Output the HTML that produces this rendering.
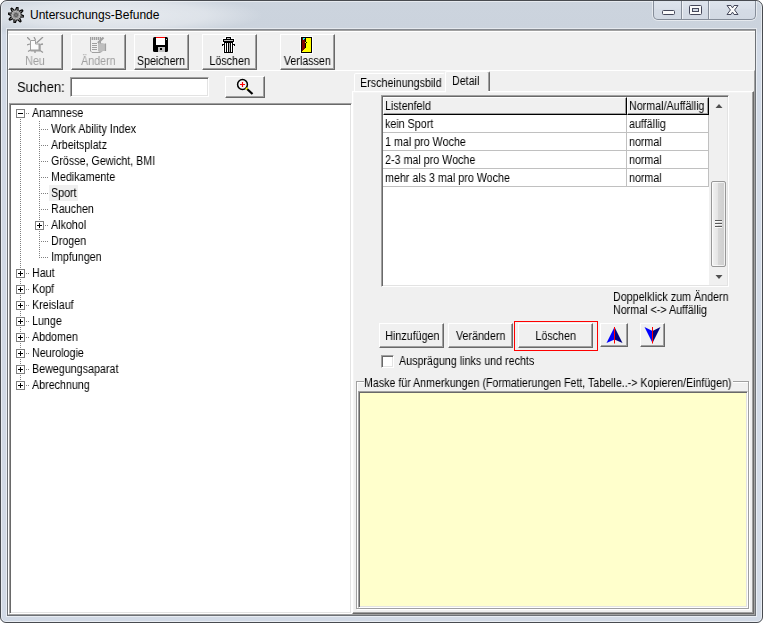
<!DOCTYPE html>
<html lang="de">
<head>
<meta charset="utf-8">
<title>Untersuchungs-Befunde</title>
<style>
html,body{margin:0;padding:0;background:#fff;}
body{width:763px;height:623px;position:relative;overflow:hidden;font-family:"Liberation Sans",Arial,sans-serif;font-size:12px;color:#000;}
*{box-sizing:border-box;}
.abs{position:absolute;}
#win{position:absolute;left:0;top:0;width:763px;height:623px;border:1px solid #484b50;border-radius:7px 7px 6px 6px;
 background:linear-gradient(180deg,#ccd4de 0px,#cbd3dd 28px,#d2dae6 34px,#d2dae6 100%);overflow:hidden;}
#win:before{content:"";position:absolute;left:0;top:0;right:0;bottom:0;border:1px solid rgba(255,255,255,.5);border-radius:6px 6px 5px 5px;}
#glow{position:absolute;left:-40px;top:-6px;width:300px;height:40px;background:radial-gradient(ellipse at 50% 50%,rgba(255,255,255,.55),rgba(255,255,255,.35) 45%,rgba(255,255,255,0) 72%);}
#title{position:absolute;left:29px;top:6px;height:16px;line-height:16px;font-size:12px;white-space:nowrap;color:#000;}
#client{position:absolute;left:6px;top:28px;width:749px;height:587px;border:1px solid #6d7176;border-top-color:#868a90;background:#f0f0f0;box-shadow:0 0 0 1px rgba(255,255,255,.5);}
/* caption buttons */
#cap{position:absolute;left:652px;top:-1px;width:103px;height:20px;border:1px solid #858d99;border-top:none;border-radius:0 0 5px 5px;
 background:linear-gradient(180deg,#dfe5ed 0,#d9dfe8 45%,#d4dbe5 55%,#d2d9e3 100%);box-shadow:0 0 0 1px rgba(255,255,255,.5);}
#cap i{position:absolute;top:0;width:1px;height:19px;background:#858d99;box-shadow:1px 0 0 rgba(255,255,255,.6);}
/* text scaling to mimic MS Sans Serif */
.s{display:inline-block;transform:scaleX(.893);transform-origin:0 50%;white-space:nowrap;will-change:transform;}
.sc{display:inline-block;transform:scaleX(.893);transform-origin:50% 50%;white-space:nowrap;will-change:transform;}
/* 3D button */
.btn{position:absolute;background:#f0f0f0;border:1px solid;border-color:#fff #696969 #696969 #fff;box-shadow:inset -1px -1px 0 #a0a0a0;text-align:center;}
.btn .lbl{position:absolute;left:-20px;right:-20px;text-align:center;height:14px;line-height:14px;}
.dis{color:#a0a0a0;}
.sunk{border:1px solid;border-color:#a0a0a0 #fff #fff #a0a0a0;box-shadow:inset 1px 1px 0 #696969,inset -1px -1px 0 #e3e3e3;}
/* tree */
#tree{position:absolute;left:9px;top:103px;width:343px;height:511px;background:#fff;}
.tr{position:absolute;height:16px;line-height:16px;white-space:nowrap;}
.box{position:absolute;width:9px;height:9px;border:1px solid #808080;background:#fff;}
.box:before{content:"";position:absolute;left:1px;top:3px;width:5px;height:1px;background:#000;}
.box.p:after{content:"";position:absolute;left:3px;top:1px;width:1px;height:5px;background:#000;}
.hd{position:absolute;height:1px;background-image:linear-gradient(90deg,#808080 50%,transparent 50%);background-size:2px 1px;}
.vd{position:absolute;width:1px;background-image:linear-gradient(180deg,#808080 50%,transparent 50%);background-size:1px 2px;}
/* grid */
#grid{position:absolute;left:381px;top:95px;width:348px;height:192px;background:#fff;}
.gl{position:absolute;background:#c0c0c0;}
.gt{position:absolute;height:16px;line-height:16px;white-space:nowrap;}
</style>
</head>
<body>
<div id="win">
 <div id="glow"></div>
 <svg class="abs" style="left:7px;top:6px" width="16" height="16" viewBox="0 0 16 16">
  <g transform="translate(8 8) rotate(10)">
   <path d="M-1.29 -4.83 L-0.56 -7.98 L0.56 -7.98 L1.29 -4.83 L2.51 -4.33 L5.25 -6.04 L6.04 -5.25 L4.33 -2.51 L4.83 -1.29 L7.98 -0.56 L7.98 0.56 L4.83 1.29 L4.33 2.51 L6.04 5.25 L5.25 6.04 L2.51 4.33 L1.29 4.83 L0.56 7.98 L-0.56 7.98 L-1.29 4.83 L-2.51 4.33 L-5.25 6.04 L-6.04 5.25 L-4.33 2.51 L-4.83 1.29 L-7.98 0.56 L-7.98 -0.56 L-4.83 -1.29 L-4.33 -2.51 L-6.04 -5.25 L-5.25 -6.04 L-2.51 -4.33Z" fill="#a4a4a4" stroke="#0a0a0a" stroke-width="1.300" stroke-linejoin="round"/>
   <path d="M0 0L2.1 -5.08 M0 0L5.08 -2.1 M0 0L5.08 2.1 M0 0L2.1 5.08 M0 0L-2.1 5.08 M0 0L-5.08 2.1 M0 0L-5.08 -2.1 M0 0L-2.1 -5.08" stroke="#d8d8d8" stroke-width=".8" fill="none"/>
   <circle r="3.100" fill="#8c8c8c"/>
   <circle r="2" fill="#5c5c5c"/>
   <circle r="1" fill="#7a7a7a"/>
  </g>
 </svg>
 <div id="title">Untersuchungs-Befunde</div>
 <div id="cap">
  <i style="left:27px"></i><i style="left:54px"></i>
  <svg class="abs" style="left:0;top:0" width="101" height="19" viewBox="0 0 101 19">
   <rect x="8.5" y="10.5" width="12" height="4" rx="1" fill="#fafafa" stroke="#45485a" stroke-width="1"/>
   <rect x="35.5" y="5.5" width="12" height="9" rx="1" fill="#fafafa" stroke="#45485a" stroke-width="1"/>
   <rect x="38.5" y="8.5" width="6" height="3" fill="#d3dae5" stroke="#45485a" stroke-width="1"/>
   <path d="M73 5.500h4l1.500 2.400 1.500-2.400h4l-3.400 4.500 3.400 4.500h-4l-1.500-2.400-1.500 2.400h-4l3.400-4.500z" fill="#fafafa" stroke="#45485a" stroke-width="1" stroke-linejoin="round"/>
  </svg>
 </div>

 <div id="client">
  <!-- coordinates inside client are offset by (8,30) from the page -->
 </div>
</div>

<!-- Everything below is positioned in page coordinates -->
<div class="abs" style="left:8px;top:30px;width:747px;height:1px;background:#a0a0a0"></div>
<div class="abs" style="left:8px;top:31px;width:747px;height:1px;background:#fff"></div>
<div class="abs" style="left:8px;top:70px;width:747px;height:545px;border:1px solid;border-color:#fff #a0a0a0 #a0a0a0 #fff"></div>

<!-- toolbar buttons -->
<div class="btn dis" style="left:8px;top:34px;width:55px;height:36px">
 <svg class="abs" style="left:18px;top:2px" width="17" height="17" viewBox="0 0 17 17" fill="none" stroke="#a0a0a0" stroke-width="1">
  <path d="M3.500 3.500h5v3.500h4.500v6.500h-9.500z" fill="#fbfbfb"/>
  <path d="M12.500 7v7M3.500 13.500h9.500" stroke-width="2"/>
  <path d="M0 0l3 3M7 0l1.500 3M16 0l-6.500 6M0 8l3-1M13.500 7.500l2.500-.5M1 14.500l2.500-1.500M8 14v2M13 13.500l3 2" stroke-width="1.300" stroke="#989898"/>
 </svg>
 <div class="lbl" style="top:19px"><span class="sc">Neu</span></div>
</div>
<div class="btn dis" style="left:71px;top:34px;width:55px;height:36px">
 <svg class="abs" style="left:18px;top:2px" width="17" height="17" viewBox="0 0 17 17" fill="none" stroke="#a0a0a0" stroke-width="1">
  <path d="M.5 2v12l1.500 1.500h8l1-1" />
  <path d="M0 1.500h11" stroke-width="3" stroke-dasharray="1.400 .6"/>
  <path d="M10.500 2.500v4"/>
  <path d="M2 6.500h5M2 8.500h5M2 10.500h5M2 12.500h5" stroke-width="1.200"/>
  <path d="M13.500 .5l-5.500 5.500" stroke-width="2.200"/>
  <path d="M8 6h4l4 1v7h-3l-2.500 2-2.500-2z" fill="#a0a0a0" fill-opacity=".62" stroke="none"/>
  <path d="M15.500 6.500v7.500" stroke-width="1.200"/>
 </svg>
 <div class="lbl" style="top:19px"><span class="sc">Ändern</span></div>
</div>
<div class="btn" style="left:134px;top:34px;width:55px;height:36px">
 <svg class="abs" style="left:18px;top:2px" width="16" height="16" viewBox="0 0 16 16">
  <rect x="0" y="0" width="15" height="15" rx="1.5" fill="#000"/>
  <rect x="3" y="1" width="9" height="7" fill="#fff"/><rect x="3" y="0" width="9" height="1" fill="#f00"/>
  <rect x="5" y="10" width="7" height="5" fill="#c0c0c0"/><rect x="7" y="11" width="2" height="2" fill="#000"/>
  <rect x="13" y="2" width="1" height="1" fill="#c0c0c0"/>
 </svg>
 <div class="lbl" style="top:19px"><span class="sc">Speichern</span></div>
</div>
<div class="btn" style="left:202px;top:34px;width:55px;height:36px">
 <svg class="abs" style="left:18px;top:1px" width="16" height="17" viewBox="0 0 16 17">
  <g stroke="#fff" stroke-width="2" fill="#fff"><rect x="5" y="1" width="5" height="2"/><rect x="2" y="3" width="11" height="3"/><rect x="3" y="6" width="9" height="11"/></g>
  <rect x="5" y="1" width="5" height="2" fill="#000"/><rect x="6" y="2" width="3" height="1" fill="#c0c0c0"/>
  <rect x="2" y="3" width="11" height="3" fill="#000"/><rect x="3" y="4" width="9" height="1" fill="#c0c0c0"/>
  <rect x="3" y="6" width="9" height="11" fill="#000"/>
  <rect x="4" y="7" width="1" height="9" fill="#fff"/><rect x="6" y="7" width="1" height="9" fill="#fff"/><rect x="8" y="7" width="1" height="9" fill="#b8b8b8"/><rect x="10" y="7" width="1" height="9" fill="#fff"/>
  <rect x="1" y="8" width="2" height="1" fill="#000"/><rect x="12" y="8" width="2" height="1" fill="#000"/><rect x="1" y="9" width="1" height="1" fill="#000"/><rect x="13" y="9" width="1" height="1" fill="#000"/>
 </svg>
 <div class="lbl" style="top:19px"><span class="sc">Löschen</span></div>
</div>
<div class="btn" style="left:280px;top:34px;width:55px;height:36px">
 <svg class="abs" style="left:19px;top:1px" width="13" height="18" viewBox="0 0 13 18">
  <rect x="0" y="0" width="13" height="18" fill="#fff"/>
  <rect x="1" y="1" width="11" height="16" fill="#000"/>
  <rect x="2" y="2" width="3" height="14" fill="#800000"/>
  <path d="M6 2h5v14h-9v-1h1v-1h1v-1h1v-1h1z" fill="#ff0"/>
  <rect x="5" y="2" width="1" height="10" fill="#000"/>
  <rect x="3" y="2" width="2" height="1" fill="#0ff"/><rect x="3" y="3" width="1" height="1" fill="#0ff"/>
  <rect x="5" y="6" width="1" height="1" fill="#ff0"/><rect x="6" y="6" width="1" height="1" fill="#000"/>
 </svg>
 <div class="lbl" style="top:19px"><span class="sc">Verlassen</span></div>
</div>

<!-- search row -->
<div class="abs" style="left:17px;top:78px;height:18px;line-height:18px;font-size:14px"><span class="s" style="transform:scaleX(.928)">Suchen:</span></div>
<div class="abs sunk" style="left:70px;top:77px;width:139px;height:20px;background:#fff"></div>
<div class="btn" style="left:225px;top:76px;width:40px;height:22px">
 <svg class="abs" style="left:10px;top:1px" width="18" height="17" viewBox="0 0 18 17">
  <circle cx="6.500" cy="6.500" r="4.900" fill="#f6f6f6" stroke="#000" stroke-width="1.500"/>
  <path d="M4 6.500h5M6.500 4v5" stroke="#f00" stroke-width="1.200"/>
  <path d="M10 10l6.500 6" stroke="#000" stroke-width="2.200"/>
  <path d="M10 10l1.300 1.200" stroke="#ff0" stroke-width="2"/>
 </svg>
</div>

<!-- tree view -->
<div id="tree" class="sunk"></div>

<!-- tab control -->
<div class="abs" style="left:352px;top:91px;width:402px;height:523px;background:#f0f0f0;border:1px solid;border-color:#fff #696969 #696969 #fff;box-shadow:inset -1px -1px 0 #a0a0a0,inset 1px 1px 0 #f4f4f4"></div>
<div class="abs" style="left:354px;top:73px;width:91px;height:18px;background:#f0f0f0;border:1px solid;border-color:#fff transparent transparent #fff;border-bottom:none;border-radius:2px 2px 0 0"></div>
<div class="abs" style="left:445px;top:71px;width:45px;height:20px;background:#f0f0f0;border:1px solid;border-color:#fff #696969 transparent #fff;border-bottom:none;border-radius:2px 2px 0 0;box-shadow:inset -1px 0 0 #a0a0a0"></div>
<div class="abs" style="left:446px;top:91px;width:42px;height:2px;background:#f0f0f0"></div>
<div class="abs" style="left:445px;top:91px;width:1px;height:1px;background:#fff"></div>
<div class="abs" style="left:360px;top:75px;height:16px;line-height:16px"><span class="s">Erscheinungsbild</span></div>
<div class="abs" style="left:452px;top:73px;height:16px;line-height:16px"><span class="s">Detail</span></div>

<!-- grid -->
<div id="grid" class="sunk"></div>

<!-- tree content -->
<div class="vd" style="left:20px;top:119px;height:266px"></div>
<div class="vd" style="left:39px;top:121px;height:137px"></div>
<div class="hd" style="left:26px;top:113px;width:4px"></div>
<div class="box " style="left:16px;top:109px"></div>
<div class="tr" style="left:32px;top:105px"><span class="s">Anamnese</span></div>
<div class="hd" style="left:41px;top:129px;width:8px"></div>
<div class="tr" style="left:51px;top:121px"><span class="s">Work Ability Index</span></div>
<div class="hd" style="left:41px;top:145px;width:8px"></div>
<div class="tr" style="left:51px;top:137px"><span class="s">Arbeitsplatz</span></div>
<div class="hd" style="left:41px;top:161px;width:8px"></div>
<div class="tr" style="left:51px;top:153px"><span class="s">Grösse, Gewicht, BMI</span></div>
<div class="hd" style="left:41px;top:177px;width:8px"></div>
<div class="tr" style="left:51px;top:169px"><span class="s">Medikamente</span></div>
<div class="hd" style="left:41px;top:193px;width:8px"></div>
<div class="abs" style="left:49px;top:185px;width:29px;height:16px;background:#f0f0f0"></div>
<div class="tr" style="left:51px;top:185px"><span class="s">Sport</span></div>
<div class="hd" style="left:41px;top:209px;width:8px"></div>
<div class="tr" style="left:51px;top:201px"><span class="s">Rauchen</span></div>
<div class="hd" style="left:45px;top:225px;width:4px"></div>
<div class="box p" style="left:35px;top:221px"></div>
<div class="tr" style="left:51px;top:217px"><span class="s">Alkohol</span></div>
<div class="hd" style="left:41px;top:241px;width:8px"></div>
<div class="tr" style="left:51px;top:233px"><span class="s">Drogen</span></div>
<div class="hd" style="left:41px;top:257px;width:8px"></div>
<div class="tr" style="left:51px;top:249px"><span class="s">Impfungen</span></div>
<div class="hd" style="left:26px;top:273px;width:4px"></div>
<div class="box p" style="left:16px;top:269px"></div>
<div class="tr" style="left:32px;top:265px"><span class="s">Haut</span></div>
<div class="hd" style="left:26px;top:289px;width:4px"></div>
<div class="box p" style="left:16px;top:285px"></div>
<div class="tr" style="left:32px;top:281px"><span class="s">Kopf</span></div>
<div class="hd" style="left:26px;top:305px;width:4px"></div>
<div class="box p" style="left:16px;top:301px"></div>
<div class="tr" style="left:32px;top:297px"><span class="s">Kreislauf</span></div>
<div class="hd" style="left:26px;top:321px;width:4px"></div>
<div class="box p" style="left:16px;top:317px"></div>
<div class="tr" style="left:32px;top:313px"><span class="s">Lunge</span></div>
<div class="hd" style="left:26px;top:337px;width:4px"></div>
<div class="box p" style="left:16px;top:333px"></div>
<div class="tr" style="left:32px;top:329px"><span class="s">Abdomen</span></div>
<div class="hd" style="left:26px;top:353px;width:4px"></div>
<div class="box p" style="left:16px;top:349px"></div>
<div class="tr" style="left:32px;top:345px"><span class="s">Neurologie</span></div>
<div class="hd" style="left:26px;top:369px;width:4px"></div>
<div class="box p" style="left:16px;top:365px"></div>
<div class="tr" style="left:32px;top:361px"><span class="s">Bewegungsaparat</span></div>
<div class="hd" style="left:26px;top:385px;width:4px"></div>
<div class="box p" style="left:16px;top:381px"></div>
<div class="tr" style="left:32px;top:377px"><span class="s">Abrechnung</span></div>
<!-- grid content -->
<div class="abs" style="left:383px;top:97px;width:244px;height:18px;background:#f0f0f0;border:1px solid;border-color:#fff #000 #000 #fff;box-shadow:inset -1px -1px 0 #a0a0a0"></div>
<div class="abs" style="left:627px;top:97px;width:82px;height:18px;background:#f0f0f0;border:1px solid;border-color:#fff #000 #000 #fff;box-shadow:inset -1px -1px 0 #a0a0a0"></div>
<div class="gl" style="left:383px;top:132px;width:326px;height:1px"></div>
<div class="gl" style="left:383px;top:150px;width:326px;height:1px"></div>
<div class="gl" style="left:383px;top:168px;width:326px;height:1px"></div>
<div class="gl" style="left:383px;top:186px;width:326px;height:1px"></div>
<div class="gl" style="left:626px;top:115px;width:1px;height:72px"></div>
<div class="gl" style="left:708px;top:115px;width:1px;height:72px"></div>
<div class="gt" style="left:385px;top:98px"><span class="s">Listenfeld</span></div>
<div class="gt" style="left:629px;top:98px"><span class="s">Normal/Auffällig</span></div>
<div class="gt" style="left:385px;top:116px"><span class="s">kein Sport</span></div>
<div class="gt" style="left:629px;top:116px"><span class="s">auffällig</span></div>
<div class="gt" style="left:385px;top:134px"><span class="s">1 mal pro Woche</span></div>
<div class="gt" style="left:629px;top:134px"><span class="s">normal</span></div>
<div class="gt" style="left:385px;top:152px"><span class="s">2-3 mal pro Woche</span></div>
<div class="gt" style="left:629px;top:152px"><span class="s">normal</span></div>
<div class="gt" style="left:385px;top:170px"><span class="s">mehr als 3 mal pro Woche</span></div>
<div class="gt" style="left:629px;top:170px"><span class="s">normal</span></div>
<!-- grid scrollbar -->
<div class="abs" style="left:709px;top:97px;width:18px;height:188px;background:#f0f0f0"></div>
<div class="abs" style="left:711px;top:181px;width:15px;height:86px;border:1px solid #979797;border-radius:2px;background:linear-gradient(90deg,#f2f2f2 0,#e4e4e4 45%,#d6d6d6 50%,#cfcfcf 100%)"></div>
<svg class="abs" style="left:709px;top:97px" width="18" height="188" viewBox="0 0 18 188">
 <path d="M6.500 11l3.500-4 3.500 4z" fill="#505050"/>
 <path d="M6.500 178l3.500 4 3.500-4z" fill="#505050"/>
 <rect x="3.500" y="85.500" width="12" height="83" rx="1" fill="none" stroke="#fff" stroke-opacity=".7"/>
 <path d="M6 123.500h7M6 126.500h7M6 129.500h7" stroke="#5a5a5a" stroke-width="1"/><path d="M6 124.500h7M6 127.500h7M6 130.500h7" stroke="#fff" stroke-opacity=".8" stroke-width="1"/>
</svg>

<!-- hint text -->
<div class="abs" style="left:613px;top:289px;height:16px;line-height:16px;white-space:nowrap"><span class="s">Doppelklick zum Ändern</span></div>
<div class="abs" style="left:613px;top:302px;height:16px;line-height:16px;white-space:nowrap"><span class="s">Normal &lt;-&gt; Auffällig</span></div>

<!-- action buttons -->
<div class="btn" style="left:379px;top:323px;width:65px;height:25px"><div class="lbl" style="top:5px;margin-left:2px"><span class="sc">Hinzufügen</span></div></div>
<div class="btn" style="left:448px;top:323px;width:65px;height:25px"><div class="lbl" style="top:5px"><span class="sc">Verändern</span></div></div>
<div class="abs" style="left:514px;top:321px;width:84px;height:30px;border:1px solid #f00"></div>
<div class="btn" style="left:518px;top:323px;width:75px;height:25px"><div class="lbl" style="top:5px"><span class="sc">Löschen</span></div></div>
<div class="btn" style="left:600px;top:323px;width:28px;height:24px">
 <svg class="abs" style="left:5px;top:3px" width="17" height="17" viewBox="0 0 17 17">
  <path d="M8.500 0l-8 16 8-3.500z" fill="#0000ff"/><path d="M8.500 0l8 16-8-3.500z" fill="#000080"/><rect x="8" y="0" width="1" height="16.500" fill="#f00"/>
 </svg>
</div>
<div class="btn" style="left:640px;top:323px;width:25px;height:24px">
 <svg class="abs" style="left:3px;top:3px" width="17" height="17" viewBox="0 0 17 17">
  <path d="M8.500 16l-8-16 8 4z" fill="#0000ff"/><path d="M8.500 16l8-16-8 4z" fill="#000080"/><rect x="8" y="0" width="1" height="16.500" fill="#f00"/>
 </svg>
</div>

<!-- checkbox -->
<div class="abs sunk" style="left:381px;top:355px;width:13px;height:13px;background:#fff"></div>
<div class="abs" style="left:399px;top:353px;height:16px;line-height:16px;white-space:nowrap"><span class="s">Ausprägung links und rechts</span></div>

<!-- group box -->
<div class="abs" style="left:356px;top:381px;width:393px;height:228px;border:1px solid #a0a0a0;box-shadow:inset 1px 1px 0 #fff,1px 1px 0 #fff"></div>
<div class="abs" style="left:364px;top:375px;width:369px;height:14px;line-height:16px;background:#f0f0f0;white-space:nowrap"><span class="s" style="transform:scaleX(.887)">Maske für Anmerkungen (Formatierungen Fett, Tabelle..-&gt; Kopieren/Einfügen)</span></div>
<div class="abs sunk" style="left:358px;top:391px;width:390px;height:217px;background:#ffffcc"></div>

</body>
</html>
